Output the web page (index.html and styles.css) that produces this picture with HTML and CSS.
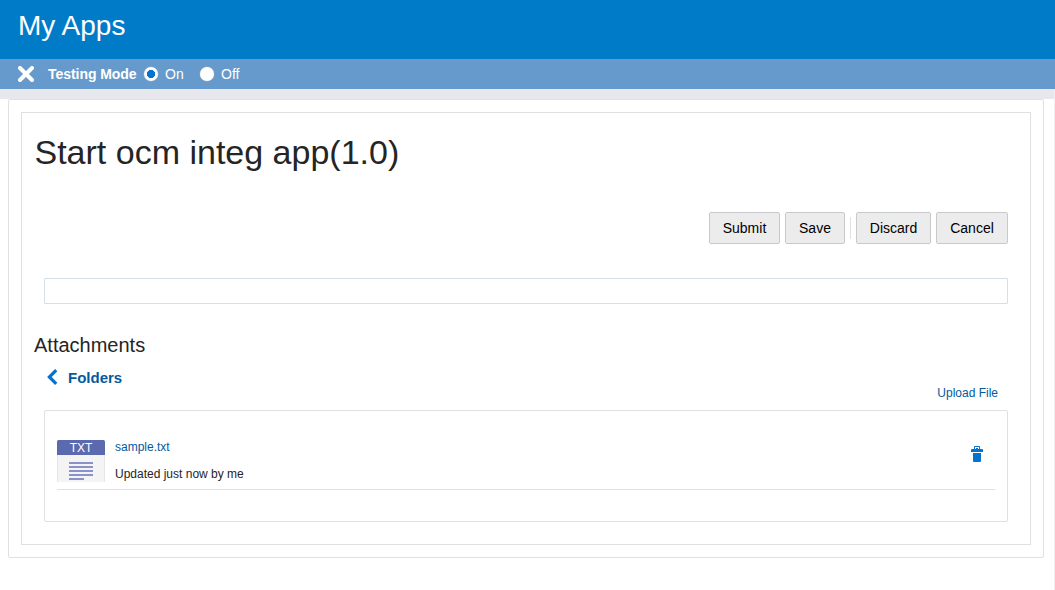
FILE: index.html
```html
<!DOCTYPE html>
<html lang="en">
<head>
<meta charset="utf-8">
<title>My Apps</title>
<link rel="stylesheet" href="styles.css">
</head>
<body>
<header class="header">My Apps</header>
<div class="testbar">
  <svg class="close" width="16" height="16" viewBox="0 0 16 16"><path d="M2 2L14 14M14 2L2 14" stroke="#fff" stroke-width="4" stroke-linecap="round"/></svg>
  <strong class="mode">Testing Mode</strong>
  <span class="radio radio-on"></span><span class="on-label">On</span>
  <span class="radio"></span><span>Off</span>
</div>
<div class="page">
  <div class="strip"></div>
  <main class="outer">
    <section class="inner">
      <h1 class="title">Start ocm integ app(1.0)</h1>
      <div class="actions">
        <button class="btn submit">Submit</button>
        <button class="btn save">Save</button>
        <span class="separator"></span>
        <button class="btn discard">Discard</button>
        <button class="btn cancel">Cancel</button>
      </div>
      <div class="field"></div>
      <h2 class="subtitle">Attachments</h2>
      <div class="folders">
        <svg class="back" width="11" height="18" viewBox="0 0 11 18"><path d="M9.200 1.200L2.400 8L9.200 14.800" fill="none" stroke="#0572ce" stroke-width="3.200"/></svg>
        <span>Folders</span>
      </div>
      <a class="upload">Upload File</a>
      <div class="files">
        <div class="file">
          <svg class="file-icon" width="48" height="42" viewBox="0 0 48 42">
            <path d="M0 15H48V42H0Z" fill="#e7e7e8"/>
            <path d="M1 15H47V42H1Z" fill="#f4f4f4"/>
            <path d="M0 15V1.500Q0 0 1.500 0H46.500Q48 0 48 1.500V15Z" fill="#5b69ae"/>
            <text class="file-type" x="24" y="12" text-anchor="middle">TXT</text>
            <path d="M12 22h24v2H12zM12 26h24v2H12zM12 30h24v2H12zM12 34h24v2H12zM12 38h15v2H12z" fill="#8a92c9"/>
          </svg>
          <div class="file-info">
            <a class="file-name">sample.txt</a>
            <span class="file-date">Updated just now by me</span>
          </div>
          <svg class="trash" width="12" height="16" viewBox="0 0 12 16"><path fill="#0572ce" fill-rule="evenodd" d="M3 3V1Q3 0 4 0H8Q9 0 9 1V3H11Q12 3 12 4V6H0V4Q0 3 1 3ZM4 1V3H5V2H7V3H8V1ZM2 7H10V15Q10 16 9 16H3Q2 16 2 15Z"/></svg>
        </div>
      </div>
    </section>
  </main>
</div>
</body>
</html>
```
FILE: styles.css
```css
* { box-sizing: border-box; }
body {
  margin: 0;
  height: 590px;
  overflow: hidden;
  display: flex;
  flex-direction: column;
  background: #fff;
  color: #252525;
  font: 12px/14px "Liberation Sans", Arial, sans-serif;
}
.header {
  height: 59px;
  padding: 10px 18px;
  background: #007bc8;
  color: #fff;
  font-size: 28px;
  line-height: 32px;
}
.testbar {
  display: flex;
  align-items: center;
  height: 30px;
  padding-left: 18px;
  background: #6699cc;
  color: #fff;
  font-size: 14px;
  line-height: 16px;
}
.close { margin-right: 14px; }
.mode { width: 96px; letter-spacing: -0.05px; }
.radio {
  width: 14px;
  height: 14px;
  margin-right: 7px;
  border-radius: 50%;
  background: #fff;
  box-shadow: 0 0 0 0.5px #9fb0c0;
}
.radio-on { background: radial-gradient(circle, #0572ce 3.8px, #fff 4.4px); }
.on-label { width: 35px; }
.page { flex: 1; border-right: 1px solid #f0f0f0; }
.strip { height: 10px; background: #e7e8ee; }
.outer {
  width: 1036px;
  height: 459px;
  margin-left: 8px;
  padding: 12px;
  border: 1px solid #dfe0e0;
  border-radius: 2px;
}
.inner {
  display: flex;
  flex-direction: column;
  height: 433px;
  padding: 19px 22px 0;
  border: 1px solid #dfe0e0;
}
.title {
  margin: 0 0 0 -9.5px;
  font-size: 34px;
  font-weight: normal;
  line-height: 40px;
}
.actions { display: flex; justify-content: flex-end; margin-top: 40px; }
.btn {
  height: 32px;
  padding: 0;
  border: 1px solid #c8c9ca;
  border-radius: 2px;
  background: #ececec;
  color: #000;
  font: 14px "Liberation Sans", Arial, sans-serif;
}
.submit { width: 71px; margin-right: 5px; }
.save { width: 60px; }
.separator { width: 1px; height: 22px; margin: 5px 5px 0; background: #dfe0e0; }
.discard { width: 75px; margin-right: 5px; }
.cancel { width: 72px; }
.field { height: 26px; margin-top: 34px; border: 1px solid #d6dfe6; border-radius: 1px; }
.subtitle {
  margin: 29px 0 0 -10px;
  font-size: 20px;
  font-weight: normal;
  line-height: 24px;
}
.folders {
  display: flex;
  align-items: center;
  height: 18px;
  margin-top: 12px;
  padding-left: 2.5px;
  color: #045a9e;
  font-size: 15px;
  font-weight: bold;
}
.back { margin-right: 10.5px; }
.upload { align-self: flex-end; margin: -1px 10px 0 0; color: #045a9e; }
.files {
  height: 112px;
  margin-top: 10px;
  padding: 29px 12px 0;
  border: 1px solid #dfe0e0;
  border-radius: 2px;
}
.file { display: flex; height: 50px; border-bottom: 1px solid #dfe0e0; }
.file-icon { margin-right: 10px; }
.file-type { fill: #fff; font-size: 12px; }
.file-info { display: flex; flex: 1; flex-direction: column; }
.file-name { color: #045a9e; }
.file-date { margin-top: 13px; }
.trash { margin: 6px 12px 0 0; }
```
